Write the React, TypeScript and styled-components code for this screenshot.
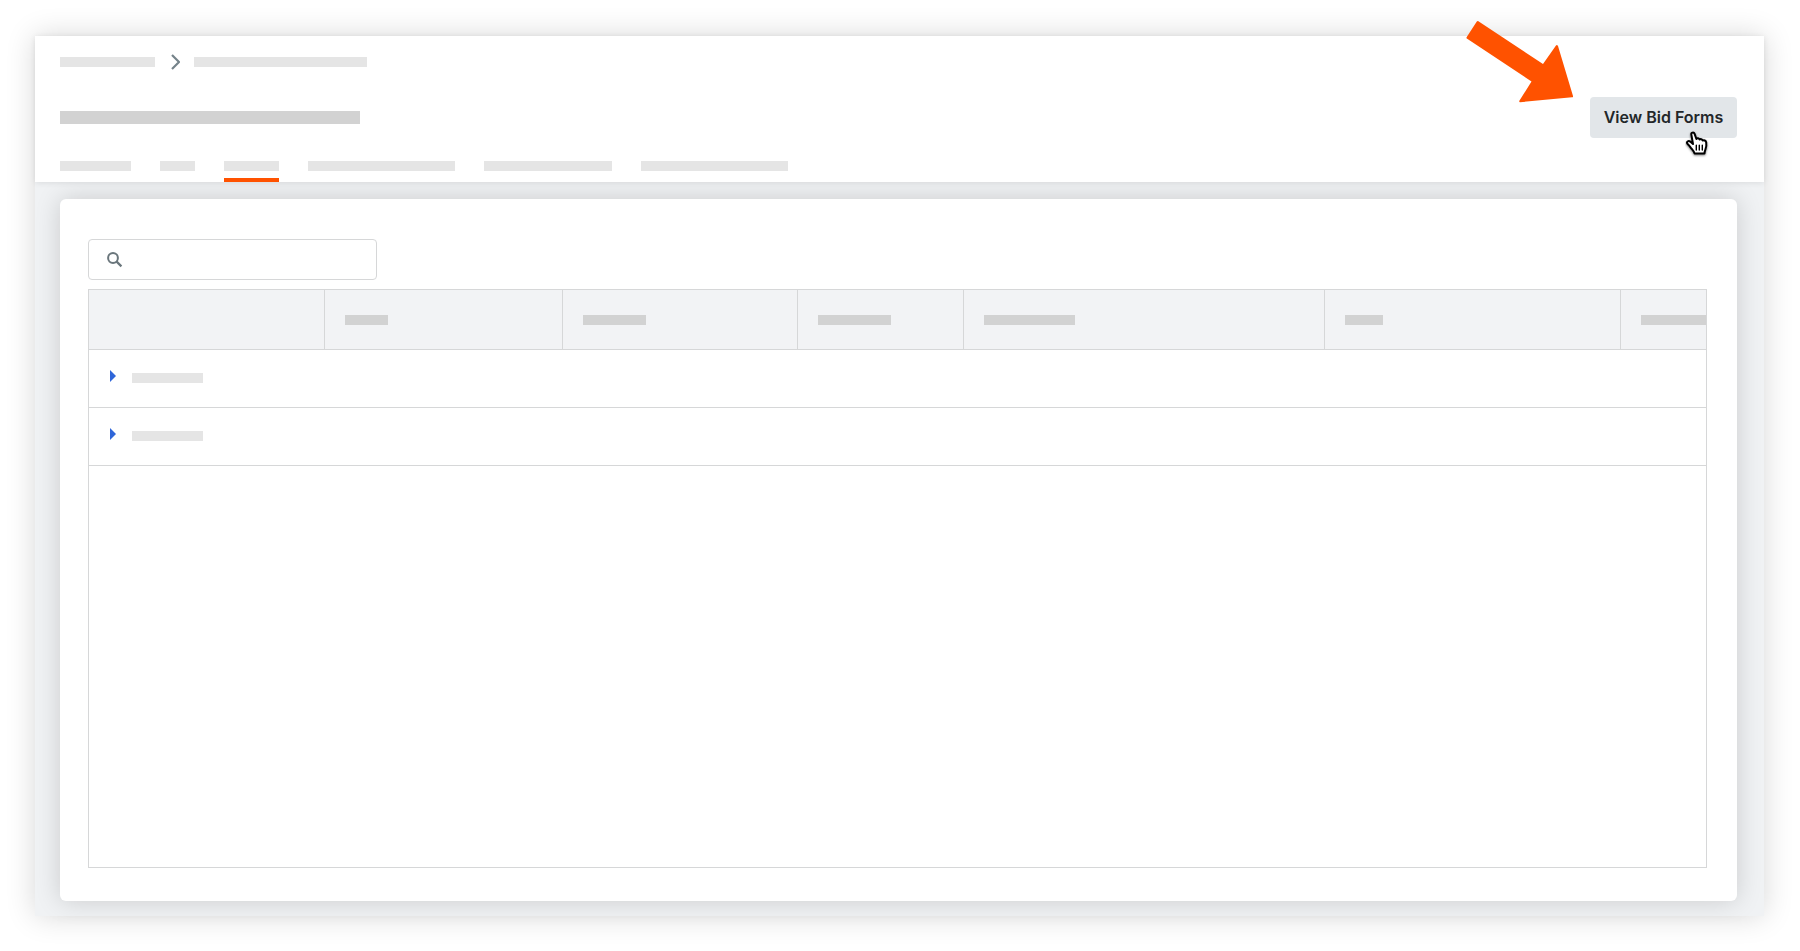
import React from "react";
import styled, { createGlobalStyle } from "styled-components";

const color = {
  accent: "#ff5200",
  line: "#d6d7d8",
  bar: "#e5e5e5",
  barStrong: "#d2d2d2",
  canvas: "#f0f2f4",
  head: "#f2f3f5",
  link: "#2f66d9",
};

const GlobalStyle = createGlobalStyle`
  *, *::before, *::after { box-sizing: border-box; }
  body {
    margin: 0;
    background: #fff;
    font-family: Inter, "Liberation Sans", sans-serif;
  }
`;

const Page = styled.div`
  display: flex;
  min-height: 100vh;
  padding: 36px 36px 35px 35px;
`;

const Window = styled.div`
  display: flex;
  flex-direction: column;
  flex: 1;
  min-width: 0;
  background: ${color.canvas};
  box-shadow: 0 0 28px rgba(0, 0, 0, 0.16);
`;

const Header = styled.header`
  position: relative;
  z-index: 1;
  padding: 18px 27px 0 25px;
  background: #fff;
  box-shadow: 0 1px 6px rgba(0, 0, 0, 0.09);
`;

const Bar = styled.span<{ $width: number; $strong?: boolean; $height?: number }>`
  display: block;
  flex: none;
  width: ${(p) => p.$width}px;
  height: ${(p) => p.$height ?? 10}px;
  background: ${(p) => (p.$strong ? color.barStrong : color.bar)};
`;

const Breadcrumbs = styled.nav`
  display: flex;
  align-items: center;
  gap: 14px;
  height: 16px;

  a { display: block; }
  svg { display: block; }
`;

const TitleRow = styled.div`
  display: flex;
  align-items: center;
  justify-content: space-between;
  margin-top: 27px;
`;

const Title = styled.h1`
  margin: 0;
`;

const ActionButton = styled.button`
  min-width: 147px;
  height: 41px;
  padding: 0 13px 2px;
  border: 0;
  border-radius: 4px;
  background: #e2e6e9;
  color: #232729;
  font: 600 16px/24px Inter, "Liberation Sans", sans-serif;
  white-space: nowrap;
  cursor: pointer;
`;

const ActionArea = styled.div`
  position: relative;
`;

const Cursor = styled.svg`
  position: absolute;
  right: 26px;
  bottom: -21px;
  pointer-events: none;
`;

const Arrow = styled.svg`
  position: absolute;
  top: -16px;
  right: 190px;
  pointer-events: none;
`;

const Tabs = styled.nav`
  display: flex;
  align-items: flex-end;
  gap: 29px;
  height: 44px;
`;

const Tab = styled.a<{ $active?: boolean }>`
  padding-bottom: 7px;
  border-bottom: 4px solid ${(p) => (p.$active ? color.accent : "transparent")};
`;

const Body = styled.main`
  display: flex;
  flex: 1;
  padding: 17px 27px 15px 25px;
`;

const Card = styled.section`
  display: flex;
  flex-direction: column;
  flex: 1;
  min-width: 0;
  padding: 40px 30px 33px 28px;
  border-radius: 6px;
  background: #fff;
  box-shadow: 0 0 26px rgba(0, 0, 0, 0.16);
`;

const SearchBox = styled.label`
  display: flex;
  align-items: center;
  gap: 12px;
  width: 289px;
  height: 41px;
  padding: 0 18px;
  border: 1px solid ${color.line};
  border-radius: 4px;

  svg { flex: none; }
`;

const SearchInput = styled.input`
  flex: 1;
  min-width: 0;
  border: 0;
  outline: 0;
  background: transparent;
  font: 400 14px/20px Inter, "Liberation Sans", sans-serif;
`;

const TableFrame = styled.div`
  flex: 1;
  margin-top: 9px;
  overflow: hidden;
  border: 1px solid ${color.line};
`;

const Table = styled.table`
  width: 100%;
  table-layout: fixed;
  border-collapse: separate;
  border-spacing: 0;
`;

const HeadCell = styled.th`
  height: 60px;
  padding: 0 0 0 20px;
  overflow: hidden;
  border-right: 1px solid ${color.line};
  border-bottom: 1px solid ${color.line};
  background: ${color.head};

  &:last-child { border-right: 0; }
`;

const GroupCell = styled.td`
  height: 58px;
  padding: 0 0 2px 21px;
  border-bottom: 1px solid ${color.line};
`;

const GroupToggle = styled.button`
  display: flex;
  align-items: center;
  gap: 16px;
  padding: 0;
  border: 0;
  background: none;
  cursor: pointer;
`;

const tabs = [
  { width: 71 },
  { width: 35 },
  { width: 55, active: true },
  { width: 147 },
  { width: 128 },
  { width: 147 },
];

const columns = [
  { width: 236, bar: 0 },
  { width: 238, bar: 43 },
  { width: 235, bar: 63 },
  { width: 166, bar: 73 },
  { width: 361, bar: 91 },
  { width: 296, bar: 38 },
  { width: undefined, bar: 90 },
];

const groups = ["first", "second"];

function PointerHand() {
  return (
    <Cursor width="26" height="30" viewBox="0 0 26 30" aria-hidden="true">
      <defs>
        <filter id="hand-shadow" x="-30%" y="-30%" width="160%" height="160%">
          <feDropShadow dx="0" dy="1" stdDeviation="1" floodOpacity="0.5" />
        </filter>
      </defs>
      <g filter="url(#hand-shadow)" strokeLinejoin="round" strokeLinecap="round">
        <path
          d="M6.3 5.4C5.9 3.4 8.9 2.9 9.6 4.9L11.4 10C12 8.9 14.2 9 14.6 10.6C15.3 9.7 17.3 10 17.7 11.6C18.9 10.9 20.9 11.4 21.2 13.4C21.6 16.3 21.3 18.2 20.5 20.2C19.9 21.8 19.5 22.7 19.5 24.6H9.6C9.1 22.5 7.4 20.8 5.9 18.9C4.9 17.4 4 16.2 2.4 14.7C1.1 12.8 3.5 11.3 5.2 12.6L8 15Z"
          fill="#fff"
          stroke="#000"
          strokeWidth="2"
        />
        <path d="M11.3 16.2V21M14.3 16.2V21M17.3 16.2V21" fill="none" stroke="#000" strokeWidth="1.4" />
      </g>
    </Cursor>
  );
}

export default function App() {
  return (
    <>
      <GlobalStyle />
      <Page>
        <Window>
          <Header>
            <Breadcrumbs aria-label="Breadcrumb">
              <a href="#parent" aria-label="Parent page"><Bar $width={95} /></a>
              <svg width="11" height="16" viewBox="0 0 11 16" aria-hidden="true">
                <path d="M3 1L10 8L3 15" fill="none" stroke="#75838a" strokeWidth="2.2" />
              </svg>
              <a href="#current" aria-label="Current page"><Bar $width={173} /></a>
            </Breadcrumbs>
            <TitleRow>
              <Title><Bar $width={300} $height={13} $strong /></Title>
              <ActionArea>
                <ActionButton type="button">View Bid Forms</ActionButton>
                <PointerHand />
              </ActionArea>
            </TitleRow>
            <Tabs aria-label="Sections">
              {tabs.map((tab, i) => (
                <Tab key={i} href={`#tab-${i + 1}`} aria-label={`Tab ${i + 1}`} $active={tab.active}>
                  <Bar $width={tab.width} />
                </Tab>
              ))}
            </Tabs>
            <Arrow width="108" height="84" viewBox="0 0 108 84" aria-hidden="true">
              <path
                d="M12 1L77 44L90 25.5Q91 24.5 92 26L107 76Q107.3 77.2 106 77.3L54 82.2Q52.8 82 53.5 80.5L65.5 61.5L.8 18.5Q.2 18 .6 17.2L10.8 1.6Q11.3 .8 12 1Z"
                fill={color.accent}
              />
            </Arrow>
          </Header>
          <Body>
            <Card>
              <SearchBox>
                <svg width="16" height="16" viewBox="0 0 16 16" fill="none" stroke="#6a767c" aria-hidden="true">
                  <circle cx="6" cy="6" r="4.9" strokeWidth="2" />
                  <path d="M9.4 9.4L14.4 14.4" strokeWidth="2.2" />
                </svg>
                <SearchInput type="search" aria-label="Search" />
              </SearchBox>
              <TableFrame>
                <Table>
                  <colgroup>
                    {columns.map((c, i) => <col key={i} width={c.width} />)}
                  </colgroup>
                  <thead>
                    <tr>
                      {columns.map((c, i) => (
                        <HeadCell key={i} scope="col" aria-label={`Column ${i + 1}`}>
                          {c.bar > 0 && <Bar $width={c.bar} $strong />}
                        </HeadCell>
                      ))}
                    </tr>
                  </thead>
                  <tbody>
                    {groups.map((g) => (
                      <tr key={g}>
                        <GroupCell colSpan={columns.length}>
                          <GroupToggle type="button" aria-expanded={false} aria-label={`Expand ${g} group`}>
                            <svg width="6" height="16" viewBox="0 0 6 16" aria-hidden="true">
                              <path d="M0 0L6 6L0 12Z" fill={color.link} />
                            </svg>
                            <Bar $width={71} />
                          </GroupToggle>
                        </GroupCell>
                      </tr>
                    ))}
                  </tbody>
                </Table>
              </TableFrame>
            </Card>
          </Body>
        </Window>
      </Page>
    </>
  );
}
